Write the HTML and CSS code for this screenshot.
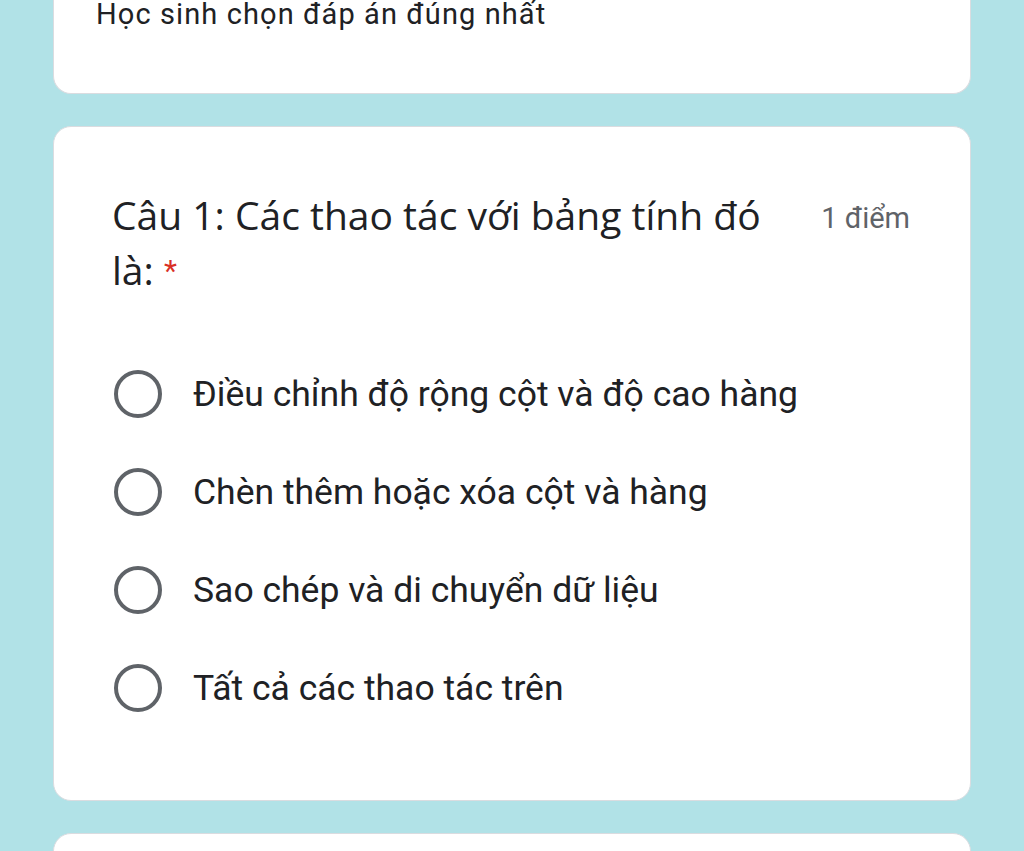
FILE: index.html
```html
<!DOCTYPE html>
<html lang="vi">
<head>
    <meta charset="utf-8">
    <title>Biểu mẫu</title>
    <link rel="stylesheet" href="styles.css">
</head>
<body>
    <div class="card card-top">
        <div class="desc">Học sinh chọn đáp án đúng nhất</div>
    </div>

    <div class="card card-question">
        <div class="qhead">
            <div class="qtitle">Câu 1: Các thao tác với bảng tính đó là: <span class="req">*</span></div>
            <div class="points">1 điểm</div>
        </div>
        <div class="options">
            <label class="option"><span class="radio"></span>Điều chỉnh độ rộng cột và độ cao hàng</label>
            <label class="option"><span class="radio"></span>Chèn thêm hoặc xóa cột và hàng</label>
            <label class="option"><span class="radio"></span>Sao chép và di chuyển dữ liệu</label>
            <label class="option"><span class="radio"></span>Tất cả các thao tác trên</label>
        </div>
    </div>

    <div class="card card-next"></div>
</body>
</html>
```

FILE: styles.css
```css
html, body {
    margin: 0;
    padding: 0;
}
body {
    background: #b1e2e7;
    font-family: Roboto, "Noto Sans", sans-serif;
    color: #202124;
    height: 851px;
    overflow: hidden;
    padding: 0 53px;
}
.card {
    background: #fff;
    border-radius: 18px;
    border: 1px solid #dadce0;
    box-sizing: border-box;
}
.card-top {
    margin-top: -30px;
    height: 124px;
    padding: 26px 0 0 42px;
    border-top: none;
}
.desc {
    font-size: 29px;
    line-height: 36px;
    letter-spacing: 1.1px;
}
.card-question {
    margin-top: 32px;
    height: 675px;
    padding: 60px 60px 0 58px;
}
.qhead {
    display: flex;
    align-items: flex-start;
}
.qtitle {
    flex: 1;
    font-family: "Open Sans", sans-serif;
    font-size: 39px;
    line-height: 55px;
    padding-right: 40px;
}
.req {
    color: #d93025;
    font-family: Roboto, sans-serif;
    font-size: 30px;
    line-height: 1;
    vertical-align: 4px;
}
.points {
    font-size: 29px;
    line-height: 36px;
    color: #5f6368;
    padding-top: 13px;
    white-space: nowrap;
}
.options {
    margin-top: 73px;
    display: flex;
    flex-direction: column;
    gap: 50px;
}
.option {
    display: flex;
    align-items: center;
    height: 48px;
    font-size: 35.5px;
    padding-left: 2px;
}
.radio {
    width: 48px;
    height: 48px;
    box-sizing: border-box;
    border: 4px solid #5f6368;
    border-radius: 50%;
    margin-right: 31px;
    flex: none;
}
.card-next {
    margin-top: 32px;
    height: 60px;
}
```
